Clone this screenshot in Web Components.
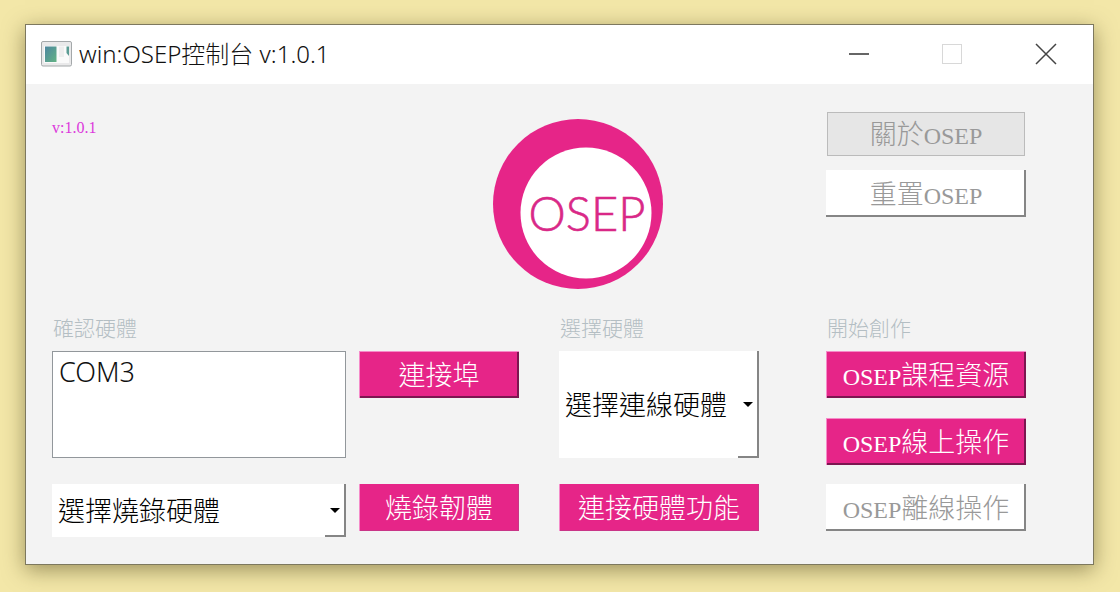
<!DOCTYPE html>
<html lang="zh-Hant">
<head>
<meta charset="utf-8">
<meta name="viewport" content="width=device-width, initial-scale=1">
<title>win:OSEP控制台 v:1.0.1</title>
<style>
  html { background: #f3e7a8; }
  body { margin: 0; padding: 24px 26px 27px 25px; font-family: "Liberation Serif", "Noto Sans CJK TC", serif; font-weight: 300; }
</style>
</head>
<body>
<osep-console></osep-console>

<script>
const define = (name, html, setup) => {
  const template = document.createElement('template');
  template.innerHTML = html;
  customElements.define(name, class extends HTMLElement {
    constructor() {
      super();
      this.attachShadow({ mode: 'open' }).append(template.content.cloneNode(true));
    }
    connectedCallback() { if (setup) setup(this, this.shadowRoot); }
  });
};

/* Push button. variant: primary | flat | plain | muted */
define('osep-button', `
  <style>
    :host { display: block; }
    button {
      box-sizing: border-box; display: block; width: 100%; height: 47px; margin: 0; padding: 0;
      border: 0; font: inherit; font-size: 27px; line-height: 50px; white-space: nowrap;
      background: #e62588; color: #fff;
      box-shadow: inset 1px 1px #f58bc9, inset -2px -2px #7c1650;
    }
    :host([variant="flat"]) button { box-shadow: inset 1px 0 #f58bc9, inset -1px -1px #c93587; }
    :host([variant="plain"]) button { background: #fff; color: #999; box-shadow: inset -2px -2px #858585; }
    :host([variant="muted"]) { padding: 0 1px; }
    :host([variant="muted"]) button { height: 44px; line-height: 46px; background: #e6e6e6; color: #999; box-shadow: inset 0 0 0 1px #bbb; }
    ::slotted(span) { font-size: 24px; }
  </style>
  <button type="button"><slot></slot></button>`);

/* Drop-down with a raised right edge and a short foot below its arrow */
define('osep-select', `
  <style>
    :host { display: grid; position: relative; height: 53px; background: #fff; }
    :host([tall]) { height: 107px; }
    select {
      appearance: none; box-sizing: border-box; width: 100%; height: 100%; min-width: 0; margin: 0;
      padding: 2px 20px 0 6px; border: 0; border-radius: 0; border-right: 2px solid #858585;
      background: none; color: #000; font: inherit; font-size: 27px;
    }
    svg { position: absolute; right: 6px; top: calc(50% - 3px); width: 10px; height: 5px; pointer-events: none; }
    i { position: absolute; right: 0; bottom: 0; width: 21px; height: 2px; background: #858585; }
  </style>
  <select><option></option></select>
  <svg viewBox="0 0 10 5" aria-hidden="true"><path d="M0 0H10L5 5Z"/></svg>
  <i></i>`,
  (host, root) => {
    root.querySelector('option').textContent = host.getAttribute('text');
    root.querySelector('select').setAttribute('aria-label', host.getAttribute('text'));
  });

define('osep-logo', `
  <style>
    :host { display: block; }
    svg { display: block; width: 100%; }
    text { font-family: Lato, sans-serif; font-weight: 300; font-size: 47px; fill: #d92887; stroke: #d92887; stroke-width: .6px; }
  </style>
  <svg viewBox="0 0 170 170" role="img" aria-label="OSEP">
    <circle cx="85" cy="85" r="85" fill="#e62588"/>
    <circle cx="93" cy="94" r="65.5" fill="#fff"/>
    <text x="94" y="112" text-anchor="middle">OSEP</text>
  </svg>`);

define('osep-titlebar', `
  <style>
    :host { display: flex; align-items: center; height: 59px; padding: 0 36px 0 15px; background: #fff; font-family: "Noto Sans", "Noto Sans CJK TC", sans-serif; }
    .app { width: 31px; height: 26px; margin-right: 7px; padding-bottom: 2px; }
    h1 { flex: 1; margin: 0; padding-bottom: 2px; font-size: 24px; line-height: 36px; font-weight: 300; color: #111; white-space: nowrap; }
    nav { display: flex; gap: 72px; padding-bottom: 2px; }
    button { display: block; width: 22px; height: 22px; padding: 0; border: 0; background: none; }
    button svg { display: block; }
  </style>
  <svg class="app" viewBox="0 0 31 26" aria-hidden="true">
    <defs><linearGradient id="g" x2="1" y2="1"><stop stop-color="#4d86a0"/><stop offset="1" stop-color="#63b384"/></linearGradient></defs>
    <rect x=".5" y=".5" width="30" height="24.5" rx="1.5" fill="#e9e9ea" stroke="#a4a8aa"/>
    <path d="M3 5H28V22H3Z" fill="#fafafa"/>
    <path d="M4 5.500H15.500V21H4Z" fill="url(#g)"/>
    <path d="M18 5.500H23V16H18Z" fill="#eee"/>
    <path d="M25.500 5.500H28V15L25.500 12Z" fill="#5b9c94"/>
  </svg>
  <h1><slot></slot></h1>
  <nav>
    <button type="button" aria-label="最小化"><svg width="22" height="22"><path d="M2 11H22" stroke="#666" stroke-width="2"/></svg></button>
    <button type="button" aria-label="最大化" disabled><svg width="22" height="22"><rect x="1.500" y="1.500" width="19" height="19" fill="none" stroke="#d8d8d8"/></svg></button>
    <button type="button" aria-label="關閉"><svg width="22" height="22"><path d="M1 1L21 21M21 1L1 21" stroke="#444" stroke-width="1.500"/></svg></button>
  </nav>`);

/* Captioned group of controls */
define('osep-group', `
  <style>
    :host { display: block; min-width: 0; }
    h2 { margin: 0 0 6px; padding-left: 1px; font-size: 21px; line-height: 32px; font-weight: 300; color: #b4bec3; }
  </style>
  <h2></h2><slot></slot>`,
  (host, root) => { root.querySelector('h2').textContent = host.getAttribute('caption'); });

define('osep-console', `
  <style>
    :host { display: block; border: 1px solid #7d785e; background: #f3f3f3; box-shadow: 0 5px 20px rgba(70, 60, 20, .5); }
    main { padding: 28px 67px 27px 26px; }
    .top { display: grid; grid-template-columns: 441fr 170fr 163fr 200fr; height: 201px; }
    .version { margin: 5px 0 0; font-size: 16px; line-height: 22px; color: #dc38dc; }
    osep-logo { margin-top: 7px; }
    .stack { display: grid; grid-column: 4; gap: 14px; align-content: start; }
    .groups { display: grid; grid-template-columns: 467fr 40fr 200fr 67fr 200fr; }
    .groups > :nth-child(2) { grid-column: 3; }
    .groups > :nth-child(3) { grid-column: 5; }
    .pair { display: grid; grid-template-columns: 294fr 160fr; gap: 26px 13px; }
    .column { display: grid; gap: 26px; }
    .spread { display: grid; height: 180px; align-content: space-between; }
    textarea {
      box-sizing: border-box; width: 100%; height: 107px; min-width: 0; margin: 0; padding: 0 6px; resize: none;
      border: 1px solid #92979b; border-radius: 0; background: #fff; color: #111;
      font: 300 27px/40px "Noto Sans", sans-serif;
    }
  </style>
  <osep-titlebar>win:OSEP控制台 v:1.0.1</osep-titlebar>
  <main>
    <section class="top">
      <p class="version">v:1.0.1</p>
      <osep-logo></osep-logo>
      <div class="stack">
        <osep-button variant="muted">關於<span>OSEP</span></osep-button>
        <osep-button variant="plain">重置<span>OSEP</span></osep-button>
      </div>
    </section>
    <section class="groups">
      <osep-group caption="確認硬體">
        <div class="pair">
          <textarea aria-label="確認硬體" readonly>COM3</textarea>
          <osep-button>連接埠</osep-button>
          <osep-select text="選擇燒錄硬體"></osep-select>
          <osep-button variant="flat">燒錄韌體</osep-button>
        </div>
      </osep-group>
      <osep-group caption="選擇硬體">
        <div class="column">
          <osep-select tall text="選擇連線硬體"></osep-select>
          <osep-button variant="flat">連接硬體功能</osep-button>
        </div>
      </osep-group>
      <osep-group caption="開始創作">
        <div class="spread">
          <osep-button><span>OSEP</span>課程資源</osep-button>
          <osep-button><span>OSEP</span>線上操作</osep-button>
          <osep-button variant="plain"><span>OSEP</span>離線操作</osep-button>
        </div>
      </osep-group>
    </section>
  </main>`);
</script>
</body>
</html>
